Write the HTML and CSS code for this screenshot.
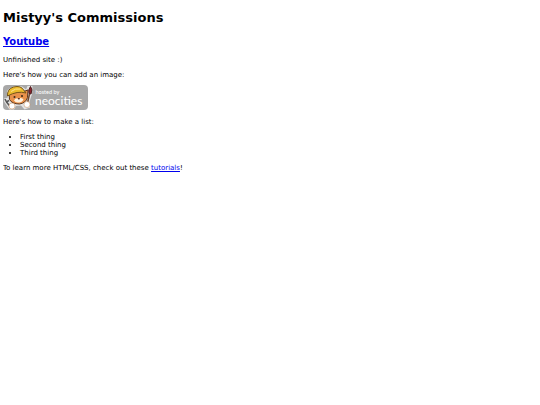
FILE: index.html
```html
<!DOCTYPE html>
<html lang="en">
<head>
<meta charset="utf-8">
<title>Mistyy's Commissions</title>
<link rel="stylesheet" href="styles.css">
</head>
<body>
<h1>Mistyy's Commissions</h1>
<h2><a href="#youtube">Youtube</a></h2>
<p>Unfinished site :)</p>
<p>Here's how you can add an image:</p>
<a class="badge" href="#neocities">
  <svg class="badge-art" viewBox="0 0 170 50" role="img" aria-label="Hosted by Neocities">
    <rect width="170" height="50" rx="8" fill="#a8a8a8"/>
    <!-- outline behind the cat -->
    <path d="M8 12 Q22 -2 38 3 L46 9 L49 2 H59 L58 18 L53 33 L54 45 L43 49 L36 41 L26 42 L22 49 L13 49 L2 33 L3 26 L9 26Z" fill="#e2e2e2"/>
    <!-- wrench -->
    <path d="M4 28 l3 6 5-3 M7 34 l8 10" fill="none" stroke="#555" stroke-width="3"/>
    <!-- head -->
    <path d="M12 15 L44 12 L50 10 L49 25 Q46 36 33 38 Q18 38 13 29Z" fill="#e8914a" stroke="#5b351c" stroke-width="2"/>
    <path d="M22 31 Q25 25 31 27 Q38 24 41 29 Q38 35 32 35 Q25 36 22 31Z" fill="#fff0dc"/>
    <circle cx="23" cy="24" r="2" fill="#392919"/>
    <circle cx="38" cy="22" r="2" fill="#392919"/>
    <path d="M29 26 h5 l-2 4z" fill="#542c20"/>
    <!-- hard hat -->
    <path d="M9 22 Q8 8 21 4 Q36 0 42 11 L46 16 Q29 11 9 22Z" fill="#edbd2e" stroke="#75551b" stroke-width="2"/>
    <path d="M16 13 Q25 6 35 8" fill="none" stroke="#ffe58b" stroke-width="2"/>
    <!-- paintbrush -->
    <path d="M55 3 Q60 9 56 18 L52 17 Q50 9 55 3Z" fill="#8d222d" stroke="#4c2020" stroke-width="2"/>
    <path d="M53 18 L49 36" stroke="#70482e" stroke-width="3"/>
    <!-- paws -->
    <circle cx="18" cy="42" r="6" fill="#fff" stroke="#c98b56"/>
    <circle cx="48" cy="39" r="6" fill="#fff" stroke="#c98b56"/>
    <text class="badge-small" x="65" y="18">hosted by</text>
    <text class="badge-name" x="64" y="40">neocities</text>
  </svg>
</a>
<p>Here's how to make a list:</p>
<ul>
  <li>First thing</li>
  <li>Second thing</li>
  <li>Third thing</li>
</ul>
<p>To learn more HTML/CSS, check out these <a href="#tutorials">tutorials</a>!</p>
</body>
</html>
```
FILE: styles.css
```css
body {
  margin: 10px 3px;
  background: #fff;
  color: #000;
  font: 7px/8px Verdana, "DejaVu Sans", sans-serif;
}

h1 {
  margin: 0 0 10px;
  font-size: 13px;
  line-height: 16px;
}

h2 {
  margin: 0 0 8px;
  font-size: 10px;
  line-height: 12px;
}

p {
  margin: 0 0 7px;
}

a {
  color: #0000ee;
}

ul {
  margin: 0 0 7px;
  padding-left: 17px;
}

.badge {
  display: block;
  width: 85px;
  margin: -1px 0 8px;
}

.badge-art {
  display: block;
  width: 100%;
}

.badge-small,
.badge-name {
  fill: #fff;
  font-family: Lato, "Open Sans", sans-serif;
}

.badge-small {
  font-size: 11px;
}

.badge-name {
  font-size: 24px;
}
```
